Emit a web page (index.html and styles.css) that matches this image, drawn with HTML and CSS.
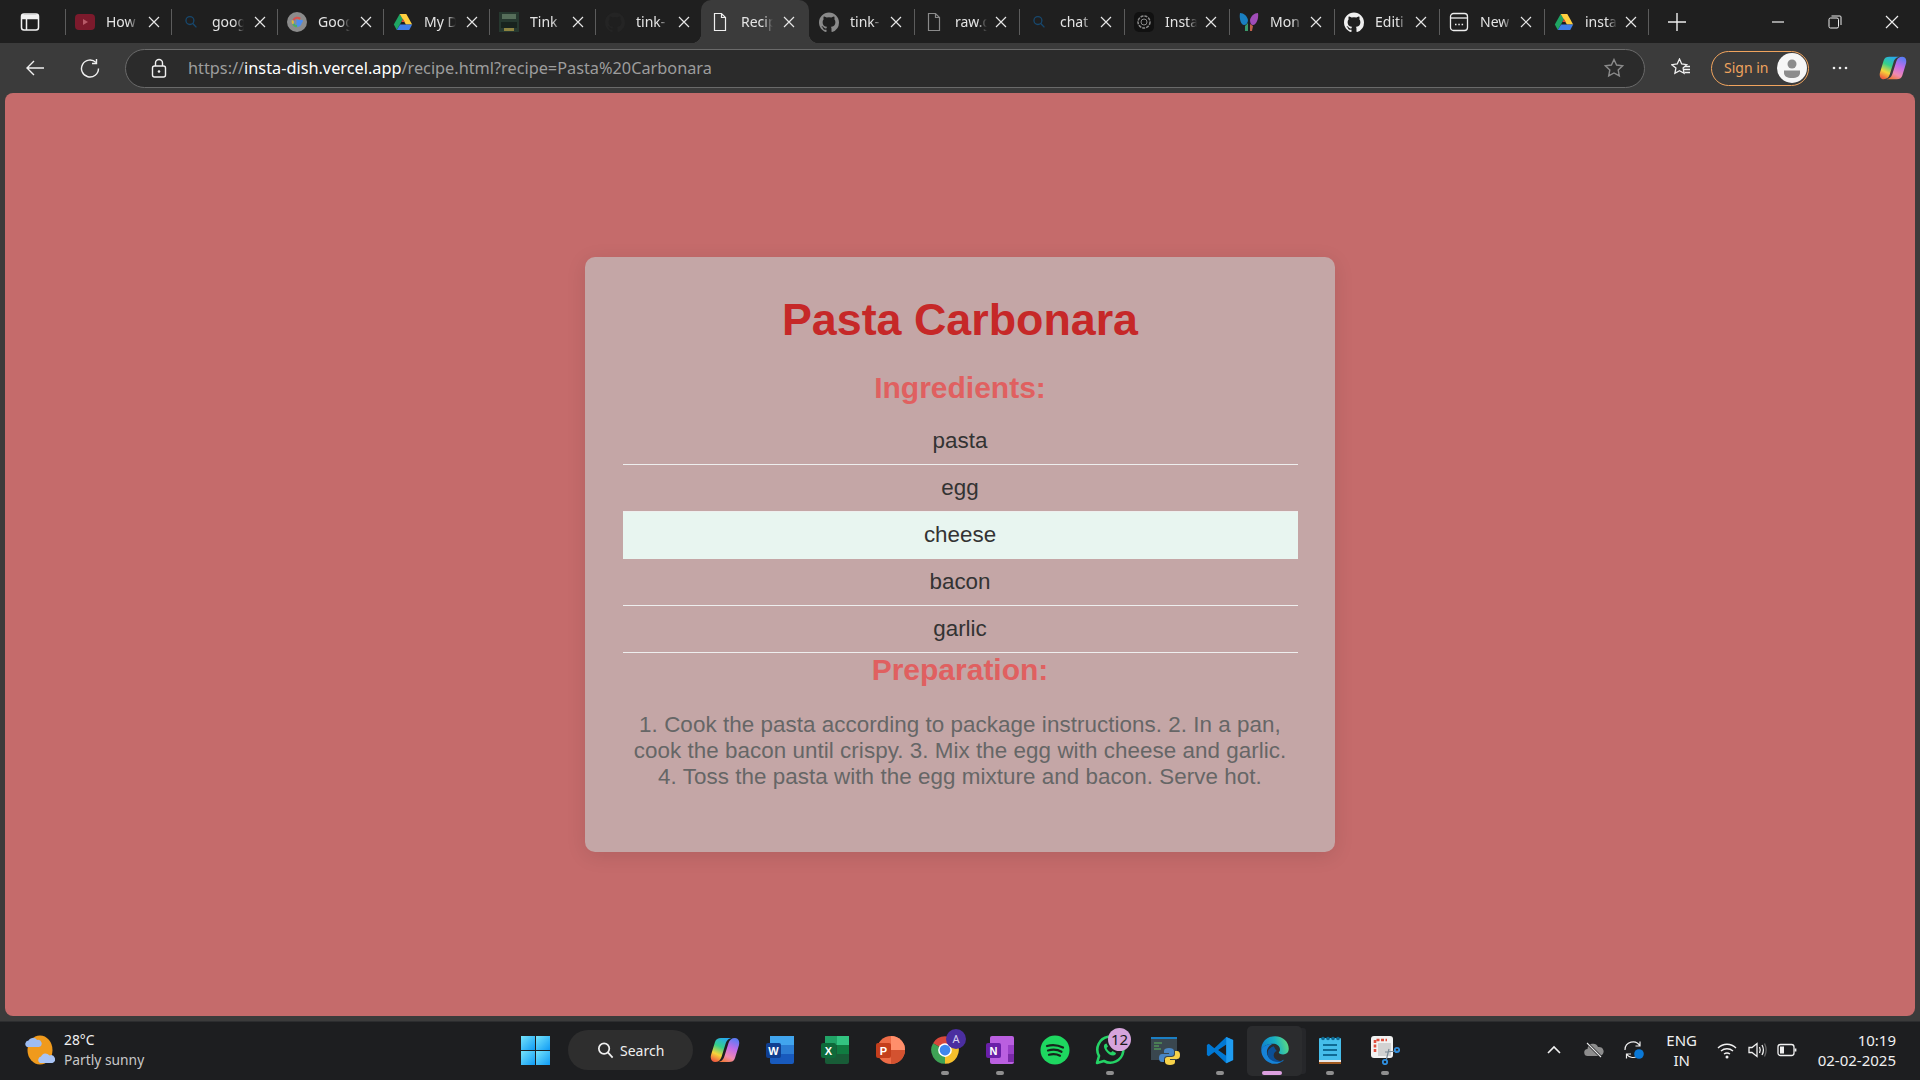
FILE: index.html
```html
<!doctype html>
<html>
<head>
<meta charset="utf-8">
<link rel="stylesheet" href="styles.css">
<title>Recipe</title>
</head>
<body>
<svg class="defs" width="0" height="0">
  <defs>
    <linearGradient id="cop-a" x1=".7" y1="0" x2=".3" y2="1"><stop offset="0" stop-color="#27a8f0"/><stop offset=".4" stop-color="#35d08a"/><stop offset=".72" stop-color="#f6d53a"/><stop offset="1" stop-color="#f0603f"/></linearGradient>
    <linearGradient id="cop-b" x1=".7" y1="0" x2=".3" y2="1"><stop offset="0" stop-color="#5c7cf5"/><stop offset=".4" stop-color="#c46ce8"/><stop offset=".75" stop-color="#f08ab0"/><stop offset="1" stop-color="#f07a40"/></linearGradient>
    <linearGradient id="edge-a" x1="0" y1=".6" x2="1" y2=".4"><stop offset="0" stop-color="#0d7fd0"/><stop offset=".55" stop-color="#1ab0c0"/><stop offset="1" stop-color="#5fdc80"/></linearGradient>
    <linearGradient id="win-a" x1="0" y1="0" x2="1" y2="1"><stop offset="0" stop-color="#76e4fb"/><stop offset="1" stop-color="#0f9bf5"/></linearGradient>
    <symbol id="i-x" viewBox="0 0 14 14"><path d="M2 2l10 10M12 2L2 12" fill="none" stroke="#e6e6e6" stroke-width="1.2"/></symbol>
    <symbol id="i-doc" viewBox="0 0 20 20"><path d="M4.5 1.5h7l4 4v13h-11zM11.500 1.500v4h4" fill="none" stroke="currentColor" stroke-width="1.200"/></symbol>
    <symbol id="i-gh" viewBox="0 0 24 24"><path fill="currentColor" d="M12 .5C5.37.5 0 5.87 0 12.500c0 5.300 3.440 9.800 8.200 11.390.6.110.82-.26.82-.58v-2.030c-3.340.73-4.040-1.610-4.040-1.610-.55-1.390-1.330-1.760-1.330-1.760-1.090-.74.08-.73.08-.73 1.200.09 1.840 1.240 1.840 1.240 1.070 1.830 2.810 1.300 3.500 1 .1-.78.42-1.310.76-1.610-2.670-.3-5.470-1.330-5.470-5.930 0-1.310.47-2.380 1.240-3.220-.14-.3-.54-1.520.1-3.180 0 0 1-.32 3.300 1.230a11.500 11.500 0 0 1 6 0c2.300-1.550 3.300-1.230 3.300-1.230.64 1.660.24 2.880.12 3.180.77.84 1.230 1.910 1.230 3.220 0 4.610-2.800 5.630-5.480 5.920.43.37.81 1.100.81 2.220v3.290c0 .32.22.7.83.58A12 12 0 0 0 24 12.500C24 5.870 18.630.5 12 .5z"/></symbol>
    <symbol id="i-search" viewBox="0 0 20 20"><circle cx="8.500" cy="8" r="5.500" fill="none" stroke="currentColor" stroke-width="1.800"/><path d="M12.500 12l5 5.500" stroke="currentColor" stroke-width="1.800"/></symbol>
    <symbol id="i-drive" viewBox="0 0 24 24"><path fill="#1fa463" d="M8 2.500L1 15l3.500 6.500 7.500-13z"/><path fill="#ffcf3f" d="M8 2.500h8L23 15h-7.500z"/><path fill="#3f7ee8" d="M4.500 21.500h15L23 15H8.500z"/><path fill="#d8503f" d="M12 8.500l-2 3.500h4z"/></symbol>
    <symbol id="i-copilot" viewBox="0 0 30 26"><path fill="url(#cop-a)" d="M11 1h11c-4 .5-5.500 3-6.500 6L11.500 20c-1 3-3 5-6.500 5C2 25 0 22 1 18L5 5c1-3 3-4 6-4z"/><path fill="url(#cop-b)" d="M19 25H8c4-.5 5.500-3 6.500-6l4-13c1-3 3-5 6.500-5C28 1 30 4 29 8l-4 13c-1 3-3 4-6 4z"/></symbol>
  </defs>
</svg>

<header class="tabstrip">
  <svg class="side-btn" width="20" height="20" viewBox="0 0 20 20"><rect x="1.500" y="2" width="17" height="16" rx="2.500" fill="none" stroke="#f2f2f2" stroke-width="1.500"/><path d="M1.500 6.500h17M6.500 6.500V18" stroke="#f2f2f2" stroke-width="1.500"/><rect x="2" y="2.500" width="16" height="4" fill="#f2f2f2"/></svg>
  <div class="tab">
    <svg class="fav" viewBox="0 0 20 20"><rect y="2" width="20" height="16" rx="4" fill="#7c1a2c"/><path d="M8 7l5 3-5 3z" fill="#b85a68"/></svg>
    <span class="tab-title">How</span><svg class="close"><use href="#i-x"/></svg>
  </div>
  <div class="tab">
    <svg class="fav small dim-blue"><use href="#i-search"/></svg>
    <span class="tab-title">goog</span><svg class="close"><use href="#i-x"/></svg>
  </div>
  <div class="tab">
    <svg class="fav" viewBox="0 0 20 20"><circle cx="10" cy="10" r="10" fill="#8c8c8c"/><path d="M15.800 9.200H10.500v2.200h3c-.5 1.500-1.800 2.400-3.400 2.400a3.800 3.800 0 0 1 0-7.600" fill="none" stroke="#4c8df0" stroke-width="2.200"/><path d="M6.400 8.200A4.300 4.300 0 0 1 13.200 6.900" fill="none" stroke="#d9534a" stroke-width="2.200"/><path d="M6.200 11.700a4.300 4.300 0 0 0 3.900 2.500" fill="none" stroke="#4fae5f" stroke-width="2.200"/><path d="M5.900 8.300a4.300 4.300 0 0 0 .3 3.400" fill="none" stroke="#e0b53a" stroke-width="2.200"/></svg>
    <span class="tab-title">Goog</span><svg class="close"><use href="#i-x"/></svg>
  </div>
  <div class="tab">
    <svg class="fav"><use href="#i-drive"/></svg>
    <span class="tab-title">My D</span><svg class="close"><use href="#i-x"/></svg>
  </div>
  <div class="tab">
    <svg class="fav" viewBox="0 0 20 20"><rect width="20" height="20" fill="#26382f"/><rect x="3" y="2" width="14" height="5" fill="#566e5a"/><rect x="2" y="10" width="16" height="6" fill="#18231e"/><rect x="5" y="16" width="10" height="3" fill="#8d8340"/></svg>
    <span class="tab-title">Tink</span><svg class="close"><use href="#i-x"/></svg>
  </div>
  <div class="tab">
    <svg class="fav faint"><use href="#i-gh"/></svg>
    <span class="tab-title">tink-</span><svg class="close"><use href="#i-x"/></svg>
  </div>
  <div class="tab active">
    <svg class="fav light"><use href="#i-doc"/></svg>
    <span class="tab-title">Recip</span><svg class="close"><use href="#i-x"/></svg>
  </div>
  <div class="tab">
    <svg class="fav grey"><use href="#i-gh"/></svg>
    <span class="tab-title">tink-</span><svg class="close"><use href="#i-x"/></svg>
  </div>
  <div class="tab">
    <svg class="fav grey"><use href="#i-doc"/></svg>
    <span class="tab-title">raw.g</span><svg class="close"><use href="#i-x"/></svg>
  </div>
  <div class="tab">
    <svg class="fav small dim-blue"><use href="#i-search"/></svg>
    <span class="tab-title">chat</span><svg class="close"><use href="#i-x"/></svg>
  </div>
  <div class="tab">
    <svg class="fav" viewBox="0 0 20 20"><rect width="20" height="20" rx="5" fill="#111"/><circle cx="10" cy="10" r="6" fill="none" stroke="#8a8a8a" stroke-width="1.500" stroke-dasharray="3 1"/><circle cx="10" cy="10" r="3" fill="none" stroke="#8a8a8a"/></svg>
    <span class="tab-title">Insta</span><svg class="close"><use href="#i-x"/></svg>
  </div>
  <div class="tab">
    <svg class="fav" viewBox="0 0 20 20"><path d="M1 1c4 0 7 3 8 7 0 3-2 5-4 5C2 13 0 7 1 1z" fill="#1a7fc0"/><path d="M19 1c-4 0-7 3-8 7 0 3 1 5 3 5 3 0 6-6 5-12z" fill="#a04cb8"/><path d="M6 14l3-3 0 8H6z" fill="#3a9a6a"/><path d="M11 12l3 2-1 5h-2z" fill="#c0604a"/></svg>
    <span class="tab-title">Mon</span><svg class="close"><use href="#i-x"/></svg>
  </div>
  <div class="tab">
    <svg class="fav light"><use href="#i-gh"/></svg>
    <span class="tab-title">Editi</span><svg class="close"><use href="#i-x"/></svg>
  </div>
  <div class="tab">
    <svg class="fav" viewBox="0 0 20 20"><rect x="1.500" y="1.500" width="17" height="17" rx="3" fill="none" stroke="#eee" stroke-width="1.300"/><path d="M1.500 6h17" stroke="#eee" stroke-width="1.300"/><path d="M6 12.500h1.500M9.300 12.500h1.500M12.600 12.500h1.500" stroke="#eee" stroke-width="1.600"/></svg>
    <span class="tab-title">New</span><svg class="close"><use href="#i-x"/></svg>
  </div>
  <div class="tab last">
    <svg class="fav"><use href="#i-drive"/></svg>
    <span class="tab-title">insta</span><svg class="close"><use href="#i-x"/></svg>
  </div>
  <svg class="new-tab" width="20" height="20" viewBox="0 0 20 20"><path d="M10 1v18M1 10h18" stroke="#eee" stroke-width="1.400"/></svg>
  <div class="win-ctrls">
    <span class="win-btn"><svg width="14" height="14" viewBox="0 0 14 14"><path d="M1 7h12" stroke="#eee" stroke-width="1.200"/></svg></span>
    <span class="win-btn"><svg width="14" height="14" viewBox="0 0 14 14"><rect x="1" y="3" width="9.500" height="10" rx="1.500" fill="none" stroke="#eee"/><path d="M3.500 1h8.500a1 1 0 0 1 1 1v8" fill="none" stroke="#eee"/></svg></span>
    <span class="win-btn"><svg width="14" height="14" viewBox="0 0 14 14"><path d="M1 1l12 12M13 1L1 13" stroke="#eee" stroke-width="1.200"/></svg></span>
  </div>
</header>

<nav class="toolbar">
  <svg class="tool-icon" viewBox="0 0 20 20"><path d="M19 10H2M9 3l-7 7 7 7" fill="none" stroke="#f0f0f0" stroke-width="1.400"/></svg>
  <svg class="tool-icon refresh" viewBox="0 0 20 20"><path d="M16 4.500A8.500 8.500 0 1 0 18.500 10.500" fill="none" stroke="#f0f0f0" stroke-width="1.400"/><path d="M16.500 1v4.500H12" fill="none" stroke="#f0f0f0" stroke-width="1.400"/></svg>
  <div class="addressbar">
    <svg class="tool-icon" viewBox="0 0 20 20"><rect x="3.500" y="8" width="13" height="11" rx="2" fill="none" stroke="#f0f0f0" stroke-width="1.400"/><path d="M6.500 8V5a3.500 3.500 0 0 1 7 0v3" fill="none" stroke="#f0f0f0" stroke-width="1.400"/><circle cx="10" cy="13.500" r="1.300" fill="#f0f0f0"/></svg>
    <span class="url">https://<b>insta-dish.vercel.app</b>/recipe.html?recipe=Pasta%20Carbonara</span>
    <svg class="tool-icon star" viewBox="0 0 20 20"><path d="M10 1.500l2.600 5.500 6 .8-4.400 4.100 1.100 6L10 15l-5.300 2.900 1.100-6L1.400 7.800l6-.8z" fill="none" stroke="#8a8a8a" stroke-width="1.400"/></svg>
  </div>
  <svg class="tool-icon favs" viewBox="0 0 20 20"><path d="M8.500 1l2.200 5 5 .7-3.600 3.400 1 5.200-4.600-2.600-4.600 2.600 1-5.200L.8 6.700l5.400-.7z" fill="none" stroke="#f0f0f0" stroke-width="1.300"/><path d="M14 8.500h5M13 11.500h6M13.500 14.500H19" stroke="#f0f0f0" stroke-width="1.300"/></svg>
  <div class="signin">
    <span>Sign in</span>
    <svg class="avatar" width="30" height="30" viewBox="0 0 30 30"><circle cx="15" cy="15" r="15" fill="#f6f6f6"/><circle cx="15" cy="11" r="4.500" fill="#8c8c8c"/><path d="M7 17.500h16v2.500c0 3-3 5-8 5s-8-2-8-5z" fill="#8c8c8c"/></svg>
  </div>
  <svg class="tool-icon dots" viewBox="0 0 20 20"><circle cx="4" cy="10" r="1.300" fill="#eee"/><circle cx="10" cy="10" r="1.300" fill="#eee"/><circle cx="16" cy="10" r="1.300" fill="#eee"/></svg>
  <svg class="tb-copilot"><use href="#i-copilot"/></svg>
</nav>

<main class="viewport">
  <section class="recipe-card">
    <h1>Pasta Carbonara</h1>
    <h2>Ingredients:</h2>
    <ul class="ingredients">
      <li>pasta</li>
      <li>egg</li>
      <li class="hovered">cheese</li>
      <li>bacon</li>
      <li>garlic</li>
    </ul>
    <h2>Preparation:</h2>
    <p>1. Cook the pasta according to package instructions. 2. In a pan, cook the bacon until crispy. 3. Mix the egg with cheese and garlic. 4. Toss the pasta with the egg mixture and bacon. Serve hot.</p>
  </section>
</main>

<footer class="taskbar">
  <div class="weather">
    <svg width="30" height="30" viewBox="0 0 30 30"><ellipse cx="15" cy="15" rx="12.500" ry="14.500" fill="#f09a1c"/><path d="M2 12a3.500 3.500 0 0 1 1.500-6.500A5 5 0 0 1 12 5a3.500 3.500 0 0 1 2 7z" fill="#9dbcf2"/><path d="M15 28a3.500 3.500 0 0 1 1-6.500 5 5 0 0 1 8.500-1 4 4 0 0 1 3 7.500z" fill="#a9c4f5"/></svg>
    <div class="weather-text"><span>28°C</span><span class="muted">Partly sunny</span></div>
  </div>
  <svg class="start" width="29" height="29" viewBox="0 0 29 29"><rect width="14" height="14" fill="url(#win-a)"/><rect x="15" width="14" height="14" fill="url(#win-a)"/><rect y="15" width="14" height="14" fill="url(#win-a)"/><rect x="15" y="15" width="14" height="14" fill="url(#win-a)"/></svg>
  <div class="search"><svg width="19" height="19"><use href="#i-search"/></svg><span>Search</span></div>
  <div class="apps">
    <span class="app"><svg class="app-icon"><use href="#i-copilot"/></svg></span>
    <span class="app"><svg class="app-icon" viewBox="0 0 30 30"><rect x="5" y="1" width="24" height="28" rx="2" fill="#185abd"/><rect x="5" y="1" width="24" height="9" fill="#41a5ee"/><rect x="5" y="10" width="24" height="9" fill="#2b7cd3"/><rect x="1" y="8" width="15" height="15" rx="2" fill="#103f91"/><text class="ico-letter" x="8.500" y="20">W</text></svg></span>
    <span class="app"><svg class="app-icon" viewBox="0 0 30 30"><rect x="5" y="1" width="24" height="28" rx="2" fill="#185c37"/><rect x="17" y="1" width="12" height="9" fill="#33c481"/><rect x="5" y="1" width="12" height="9" fill="#21a366"/><rect x="17" y="10" width="12" height="9" fill="#107c41"/><rect x="1" y="8" width="15" height="15" rx="2" fill="#0e6a3a"/><text class="ico-letter" x="8.500" y="20">X</text></svg></span>
    <span class="app"><svg class="app-icon" viewBox="0 0 30 30"><circle cx="16" cy="15" r="14" fill="#ed6c47"/><path d="M16 1a14 14 0 0 1 14 14H16z" fill="#ff8f6b"/><path d="M16 15h14a14 14 0 0 1-14 14z" fill="#d35230"/><rect x="1" y="8" width="15" height="15" rx="2" fill="#c43e1c"/><text class="ico-letter" x="8.500" y="20">P</text></svg></span>
    <span class="app open"><svg class="app-icon" viewBox="0 0 24 24"><path fill="#d8483b" d="M2.470 6.500A11 11 0 0 1 21.530 6.500L12 12z"/><path fill="#f6c02c" d="M21.530 6.500A11 11 0 0 1 12 23L12 12z"/><path fill="#3ea355" d="M12 23A11 11 0 0 1 2.470 6.500L12 12z"/><circle cx="12" cy="12" r="5.500" fill="#fff"/><circle cx="12" cy="12" r="4.300" fill="#3f86ee"/></svg><b class="badge purple">A</b></span>
    <span class="app open"><svg class="app-icon" viewBox="0 0 30 30"><rect x="5" y="1" width="24" height="28" rx="2" fill="#ba5fe0"/><rect x="23" y="10" width="6" height="9" fill="#9a3fc8"/><rect x="23" y="19" width="6" height="8" fill="#7a2aa8"/><rect x="1" y="8" width="15" height="15" rx="2" fill="#6a1fa8"/><text class="ico-letter" x="8.500" y="20">N</text></svg></span>
    <span class="app"><svg class="app-icon" viewBox="0 0 30 30"><circle cx="15" cy="15" r="14.500" fill="#1ed760"/><path d="M7 11c5-1.500 11-1 16 1.500M8 15.500c4.500-1.200 10-.8 13.500 1.300M9 19.700c4-1 8-.6 11 1" fill="none" stroke="#16261c" stroke-width="2.200" stroke-linecap="round"/></svg></span>
    <span class="app open"><svg class="app-icon" viewBox="0 0 30 30"><path d="M2 28l2-7A13 13 0 1 1 9 26z" fill="none" stroke="#25d366" stroke-width="2.600" stroke-linejoin="round"/><path d="M10 9c-1.500 1-1.500 3.500.5 6.500s5 5 7.500 5c2 0 3-1.500 3-2.500l-3.500-2-1.500 1.500c-2-1-3.500-2.500-4.500-4.500l1.500-1.500L11.500 8.500z" fill="#25d366"/></svg><b class="badge pink">12</b></span>
    <span class="app"><svg class="app-icon" viewBox="0 0 30 30"><rect x="1" y="2" width="26" height="23" fill="#3a474f"/><rect x="1" y="2" width="26" height="2" fill="#1b7fc4"/><path d="M4 8h8M4 11h5M4 14h7" stroke="#5cb85c" stroke-width="1.100"/><path fill="#4a86c5" d="M19 13c-3 0-5 .8-5 3v2h5v1h-7c-2 0-3 1.500-3 4s1 4 3 4h2v-3c0-2 1.500-3 3.500-3h4c1.500 0 2.500-1 2.500-2.500V16c0-2-2-3-5-3z"/><path fill="#f7d24a" d="M20 30c3 0 5-.8 5-3v-2h-5v-1h7c2 0 3-1.500 3-4s-1-4-3-4h-2v3c0 2-1.500 3-3.500 3h-4c-1.500 0-2.500 1-2.500 2.500V27c0 2 2 3 5 3z"/></svg></span>
    <span class="app open"><svg class="app-icon" viewBox="0 0 24 24"><path fill="#0078d4" fill-rule="evenodd" d="M17 1.500L22.500 4v16L17 22.500l-9.500-9L3 17l-1.500-1V8L3 7l4.500 3.500zM17 7.500L10.500 12l6.500 4.500z"/><path fill="#1f9cf0" d="M17 1.500L22.500 4v16L17 22.500z"/></svg></span>
    <span class="app current"><svg class="app-icon" viewBox="0 0 24 24"><path fill="url(#edge-a)" d="M1 12C1 5 6 1 12 1c6.500 0 11 4.500 11 10 0 3-2 4.500-4.500 4.500-2 0-3.500-.8-3.500-1.500 0-.5 1-1 1-2.500C16 8.500 13 7 10.500 7 5 7 2 10 1 12z"/><path fill="#1683d8" d="M1 12c1-3 5-5 9.500-5-3.500 1.500-5 4-5 6.500 0 4 3.500 7.500 8.500 7.500 2 0 4-.5 5.500-1.500-2 2.500-5 3.500-8 3.500C6 23 1 18 1 12z"/><path fill="#0b4f96" d="M11 9c-3 1-5 3-5 5.500 0 4 3.500 7 8.500 7 1.500 0 3-.3 4-.8-3 .5-7-1-7.500-4-.3-2 1-3.500 2.500-4-1-.8-2-2.700-2.500-3.700z"/></svg></span>
    <span class="app open"><svg class="app-icon" viewBox="0 0 30 30"><rect x="4" y="3" width="22" height="23" rx="1" fill="#45bdea"/><rect x="4" y="25" width="22" height="2" fill="#e8e8e8"/><rect x="4" y="27" width="22" height="2" fill="#a05a20"/><path d="M8 10h14M8 15h14M8 20h14" stroke="#0f6a94" stroke-width="2"/><circle cx="8" cy="3.500" r="1.800" fill="#0f6a94"/><circle cx="13" cy="3.500" r="1.800" fill="#0f6a94"/><circle cx="18" cy="3.500" r="1.800" fill="#0f6a94"/><circle cx="23" cy="3.500" r="1.800" fill="#0f6a94"/></svg></span>
    <span class="app open"><svg class="app-icon" viewBox="0 0 30 30"><rect x="1" y="1" width="22" height="22" rx="3" fill="#f2f2f2"/><path d="M5 17V5h12" fill="none" stroke="#e0503f" stroke-width="2.600" stroke-dasharray="3 1.500"/><rect x="8" y="8" width="13" height="13" fill="#d2d2d2"/><path d="M15 17l13-1M19 14l-3 12" stroke="#7a8a96" stroke-width="1.200"/><circle cx="27" cy="15" r="2.200" fill="none" stroke="#2f8fe0" stroke-width="1.800"/><circle cx="15" cy="27" r="2.200" fill="none" stroke="#2f8fe0" stroke-width="1.800"/></svg></span>
  </div>
  <div class="tray">
    <svg class="tray-icon" viewBox="0 0 20 20"><path d="M4 13l6-6 6 6" fill="none" stroke="#f0f0f0" stroke-width="1.600"/></svg>
    <svg class="tray-icon" viewBox="0 0 20 20"><path d="M4 16a3.500 3.500 0 0 1-.5-7A5.500 5.500 0 0 1 14 7a4.500 4.500 0 0 1 2 9z" fill="#8d8d8d"/><path d="M3 3l14 14" stroke="#1d1e20" stroke-width="2.500"/><path d="M3 3l14 14" stroke="#e8e8e8" stroke-width="1.100"/></svg>
    <svg class="tray-icon" viewBox="0 0 20 20"><path d="M1 10a8 8 0 0 1 15-4M16 1.500V6h-4.500" fill="none" stroke="#f0f0f0" stroke-width="1.200"/><path d="M13 16.500A8 8 0 0 1 2.500 14M2.500 18.500V14H7" fill="none" stroke="#f0f0f0" stroke-width="1.200"/><circle cx="15" cy="14" r="4.800" fill="#0a78d6"/></svg>
    <div class="lang"><span>ENG</span><span>IN</span></div>
    <svg class="tray-icon sm" viewBox="0 0 20 20"><path d="M1 8c5-5 13-5 18 0M4 11c3.500-3 8.500-3 12 0M7 14c1.800-1.300 4.200-1.300 6 0" fill="none" stroke="#f0f0f0" stroke-width="1.400"/><circle cx="10" cy="17" r="1.500" fill="#f0f0f0"/></svg>
    <svg class="tray-icon sm" viewBox="0 0 20 20"><path d="M2 7.500h3L10 3.500v13L5 12.500H2z" fill="none" stroke="#f0f0f0" stroke-width="1.300"/><path d="M12.500 7c1 2 1 4 0 6M15 5c1.700 3 1.700 7 0 10" fill="none" stroke="#f0f0f0" stroke-width="1.300"/><path d="M17.500 3.500c2 4 2 9 0 13" fill="none" stroke="#666" stroke-width="1.300"/></svg>
    <svg class="tray-icon sm" viewBox="0 0 20 20"><rect x="1" y="4.500" width="16" height="11" rx="2.500" fill="none" stroke="#f0f0f0" stroke-width="1.300"/><rect x="3" y="6.500" width="4" height="7" fill="#f0f0f0"/><path d="M18.500 8.500v3" stroke="#f0f0f0" stroke-width="1.800"/></svg>
    <div class="clock"><span>10:19</span><span>02-02-2025</span></div>
  </div>
</footer>
</body>
</html>
```

FILE: styles.css
```css
* {
    box-sizing: border-box;
}
html,
body {
    margin: 0;
    height: 100%;
}
body {
    width: 1920px;
    height: 1080px;
    overflow: hidden;
    display: flex;
    flex-direction: column;
    background-color: #3b3b3b;
    font-family: "Noto Sans", "Open Sans", sans-serif;
    color: #f0f0f0;
}
.defs {
    display: block;
    flex: none;
}

/* tabs */
.tabstrip {
    flex: none;
    height: 43px;
    display: flex;
    align-items: center;
    background-color: #1f1f1f;
    padding-left: 20px;
}
.side-btn {
    flex: none;
    margin-right: 25px;
}
.tab {
    flex: none;
    width: 106px;
    height: 26px;
    display: flex;
    align-items: center;
    padding-left: 9px;
    border-left: 1px solid #5c5c5c;
    font-size: 14px;
    color: #e4e4e4;
}
.tab.active {
    position: relative;
    width: 108px;
    height: 43px;
    border-left: 0;
    background-color: #3b3b3b;
    border-radius: 10px 10px 0 0;
}
.tab.active::before,
.tab.active::after {
    content: "";
    position: absolute;
    bottom: 0;
    width: 10px;
    height: 10px;
}
.tab.active::before {
    left: -10px;
    background: radial-gradient(circle at 0 0, transparent 10px, #3b3b3b 10.5px);
}
.tab.active::after {
    right: -10px;
    background: radial-gradient(circle at 100% 0, transparent 10px, #3b3b3b 10.5px);
}
.tab.active ~ .tab {
    width: 105px;
}
.tab.active ~ .tab .close {
    margin-left: 7px;
}
.tab.active + .tab {
    border-left-color: transparent;
}
.tab.last {
    border-right: 1px solid #5c5c5c;
}
.fav {
    flex: none;
    width: 20px;
    height: 20px;
    margin-right: 11px;
}
.fav.small {
    transform: scale(0.72);
}
.fav.dim-blue {
    color: #17486e;
}
.fav.faint {
    color: #242424;
}
.fav.grey {
    color: #8a8a8a;
}
.fav.light {
    color: #f0f0f0;
}
.tab-title {
    flex: none;
    width: 32px;
    overflow: hidden;
    white-space: nowrap;
    -webkit-mask-image: linear-gradient(to right, #000 70%, transparent);
    mask-image: linear-gradient(to right, #000 70%, transparent);
}
.close {
    flex: none;
    width: 14px;
    height: 14px;
    margin-left: 9px;
}
.new-tab {
    flex: none;
    margin-left: 18px;
}
.win-ctrls {
    margin-left: auto;
    display: flex;
}
.win-btn {
    width: 57px;
    height: 43px;
    display: flex;
    align-items: center;
    justify-content: center;
}

/* address bar row */
.toolbar {
    flex: none;
    height: 50px;
    display: flex;
    align-items: center;
    padding-left: 25px;
    background-color: #3b3b3b;
}
.tool-icon {
    flex: none;
    width: 20px;
    height: 20px;
}
.refresh {
    margin-left: 35px;
}
.addressbar {
    flex: none;
    width: 1520px;
    height: 39px;
    margin-left: 25px;
    padding: 0 20px 0 23px;
    display: flex;
    align-items: center;
    border: 1px solid #6a6a6a;
    border-radius: 20px;
    background-color: #2b2b2b;
}
.url {
    margin-left: 19px;
    padding-bottom: 1px;
    font-size: 16.300px;
    color: #9d9d9d;
    white-space: nowrap;
}
.url b {
    font-weight: 400;
    color: #fff;
}
.star {
    margin-left: auto;
}
.favs {
    margin-left: 26px;
}
.signin {
    flex: none;
    width: 98px;
    height: 35px;
    margin-left: 20px;
    padding: 0 1px 0 12px;
    display: flex;
    align-items: center;
    justify-content: space-between;
    border: 1px solid #f0a45e;
    border-radius: 18px;
    color: #f0a45e;
    font-size: 14px;
}
.signin span {
    padding-bottom: 2px;
}
.dots {
    margin-left: 21px;
}
.tb-copilot {
    flex: none;
    width: 28px;
    height: 26px;
    margin-left: 29px;
}

/* page */
.viewport {
    flex: 1;
    margin: 0 5px 5px;
    display: flex;
    align-items: center;
    justify-content: center;
    background-color: #c56b6b;
    border-radius: 8px;
}
.recipe-card {
    width: 750px;
    padding: 37px 37.500px 38px;
    text-align: center;
    font-family: "Liberation Sans", Arial, sans-serif;
    background-color: #c4a6a6;
    border-radius: 10px;
    box-shadow: 0 4px 20px rgba(0, 0, 0, 0.1);
}
h1 {
    margin: 0 0 26px;
    font-size: 44.800px;
    color: #c62828;
}
h2 {
    margin: 0 0 13px;
    font-size: 30px;
    color: #e06060;
}
.ingredients {
    list-style: none;
    margin: 0;
    padding: 0;
}
.ingredients li {
    padding: 10px;
    font-size: 22.400px;
    color: #333;
    border-bottom: 1px solid #eee;
}
.ingredients li.hovered {
    background-color: #e8f5f0;
    border-bottom-color: #e8f5f0;
}
.recipe-card p {
    margin: 25px 0 24px;
    padding: 0 5px;
    font-size: 22.400px;
    letter-spacing: 0.05px;
    color: #666;
}

/* windows taskbar */
.taskbar {
    flex: none;
    height: 59px;
    padding-bottom: 2px;
    display: flex;
    align-items: center;
    background-color: #1d1e20;
    border-top: 1px solid #2c2d2f;
    font-size: 14px;
}
.weather {
    flex: none;
    width: 521px;
    padding-left: 25px;
    display: flex;
    align-items: center;
    gap: 9px;
}
.weather-text {
    display: flex;
    flex-direction: column;
    font-size: 13.800px;
    line-height: 20px;
}
.muted {
    color: #c8c8c8;
}
.start {
    flex: none;
}
.search {
    flex: none;
    width: 125px;
    height: 40px;
    margin-left: 18px;
    padding-left: 28px;
    display: flex;
    align-items: center;
    gap: 5px;
    border-radius: 20px;
    background-color: #2e2e2e;
}
.apps {
    margin: 2px 0 0 4px;
    display: flex;
}
.app {
    position: relative;
    width: 55px;
    height: 50px;
    padding-bottom: 2px;
    display: flex;
    align-items: center;
    justify-content: center;
}
.app-icon {
    width: 30px;
    height: 30px;
}
.app.open::after,
.app.current::after {
    content: "";
    position: absolute;
    bottom: 1px;
    left: 24px;
    width: 8px;
    height: 4px;
    border-radius: 2px;
    background-color: #8f8f8f;
}
.app.current {
    background-color: #2b2c2e;
    border-radius: 5px;
    box-shadow: 6px 0 0 -2px #26272a;
}
.app.current::after {
    left: 15px;
    width: 20px;
    background-color: #dca0e0;
}
.ico-letter {
    font: 700 11px "Liberation Sans", sans-serif;
    fill: #fff;
    text-anchor: middle;
}
.badge {
    position: absolute;
    top: 3px;
    right: 6px;
    width: 20px;
    height: 20px;
    border-radius: 50%;
    font-size: 11px;
    font-weight: 400;
    line-height: 20px;
    text-align: center;
}
.badge.purple {
    background-color: #4b2ea0;
    color: #d8d0f0;
}
.badge.pink {
    top: 2px;
    width: 23px;
    height: 23px;
    background-color: #d6a4dc;
    color: #1a1a1a;
    font-size: 15px;
    line-height: 23px;
}
.tray {
    margin-left: auto;
    padding-right: 24px;
    display: flex;
    align-items: center;
}
.tray-icon {
    flex: none;
    width: 20px;
    height: 20px;
    margin: 0 10px;
}
.tray-icon.sm {
    margin: 0 5px;
}
.lang {
    width: 56px;
    margin-right: 2px;
    display: flex;
    flex-direction: column;
    align-items: center;
    font-size: 15px;
    line-height: 20px;
}
.clock {
    margin-left: 16px;
    display: flex;
    flex-direction: column;
    align-items: flex-end;
    font-size: 15px;
    line-height: 20px;
}
```
